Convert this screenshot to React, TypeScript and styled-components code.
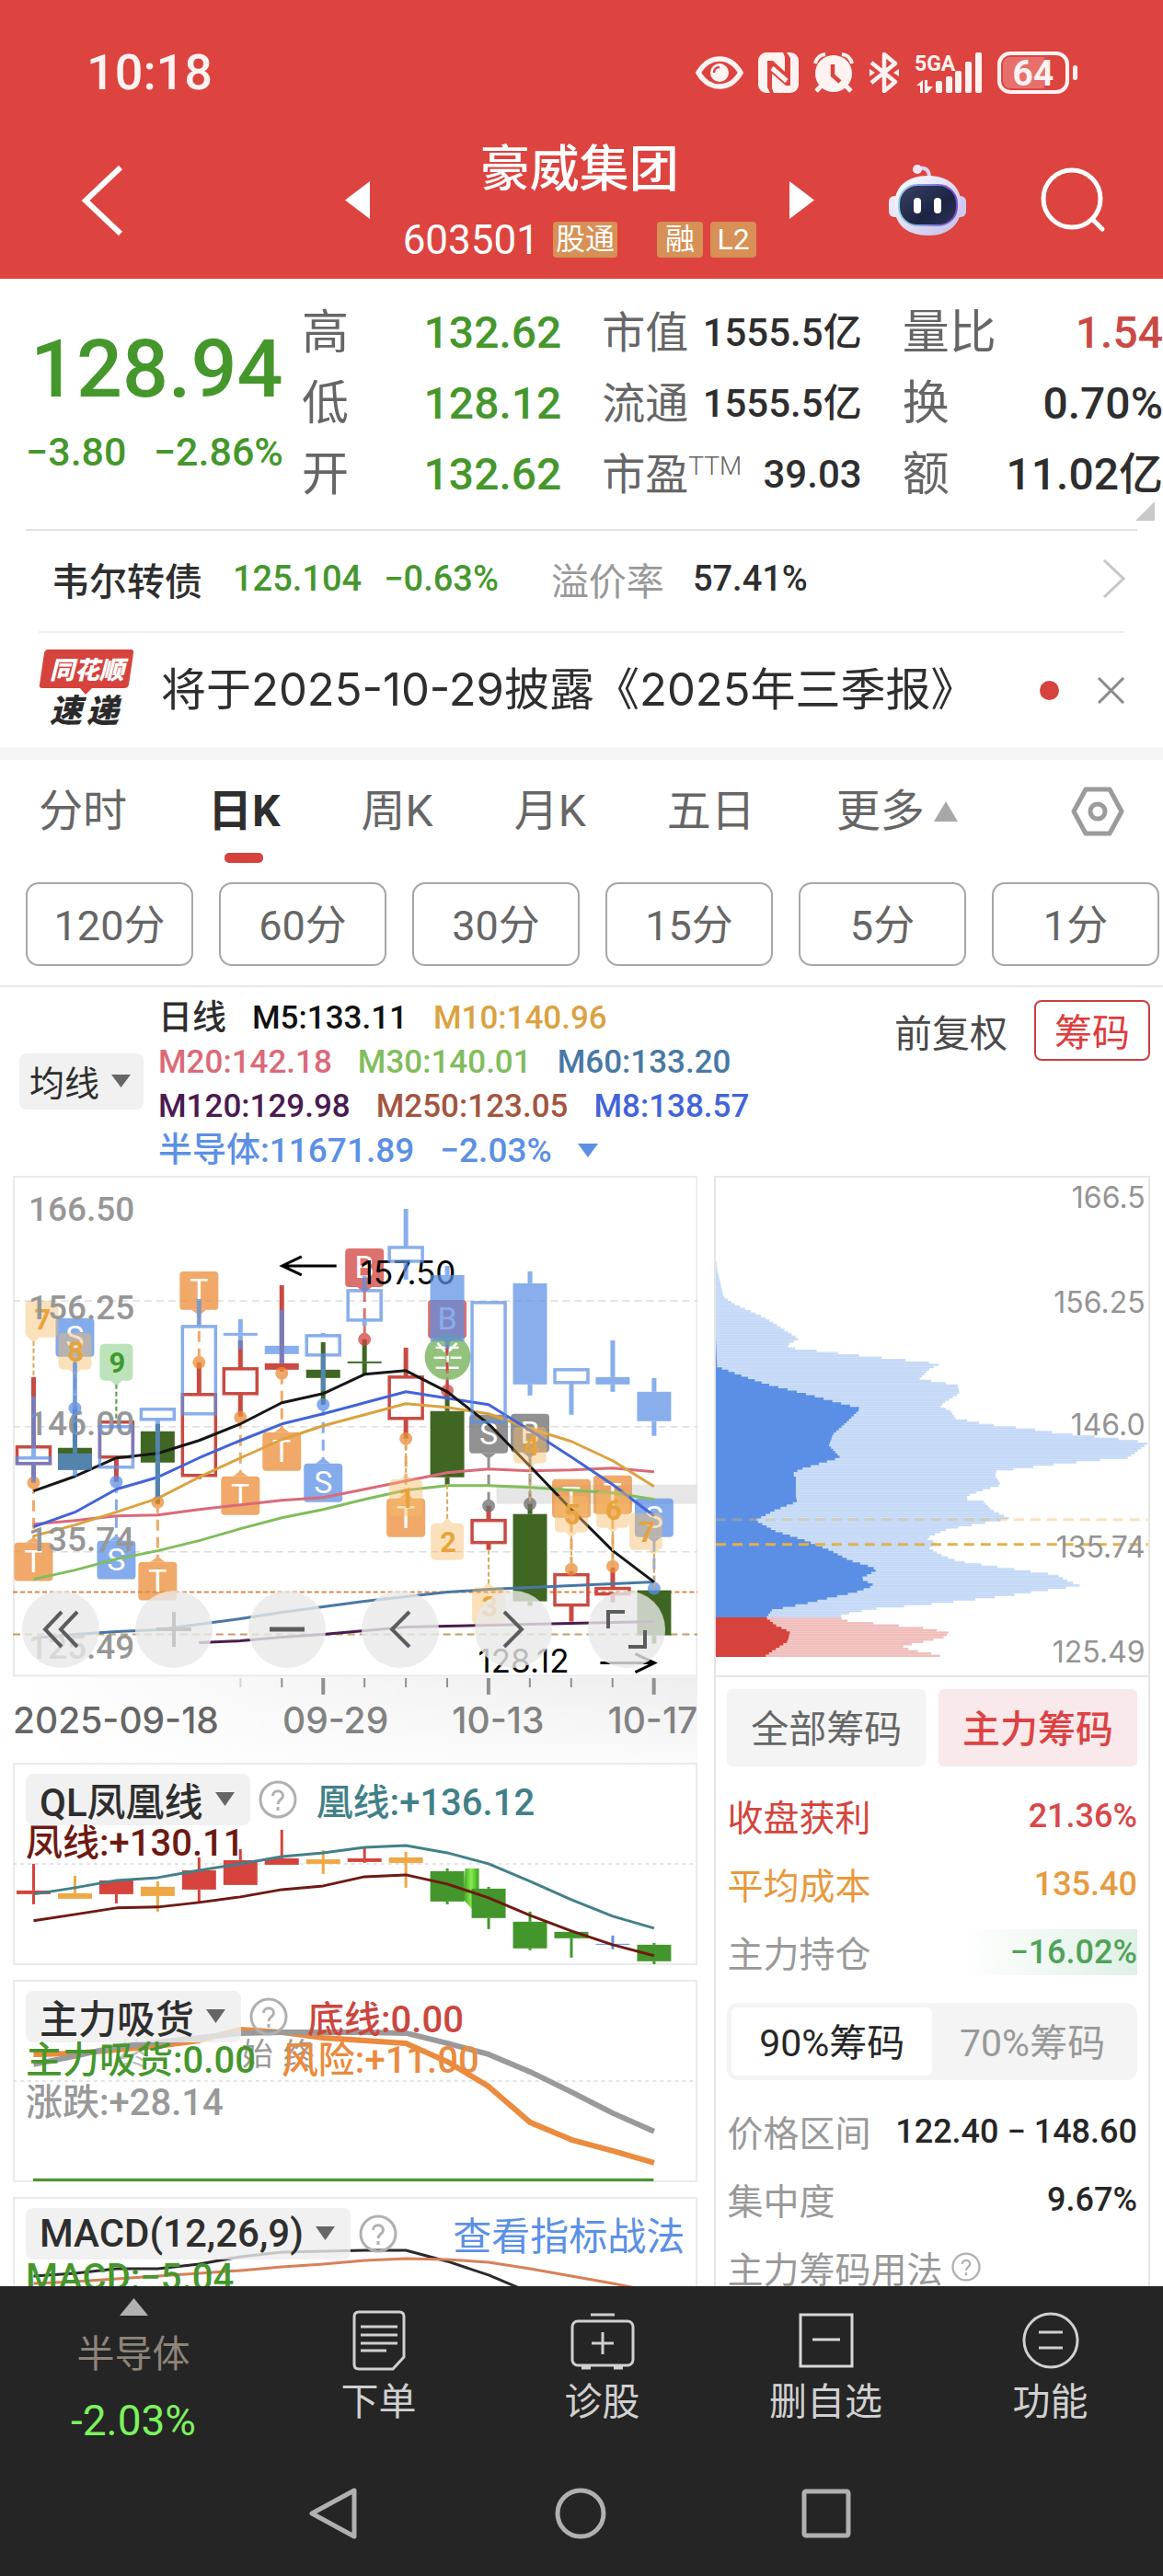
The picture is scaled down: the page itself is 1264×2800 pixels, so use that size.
import React from 'react';
import styled, { createGlobalStyle } from 'styled-components';

const SANS = "Roboto, 'Noto Sans CJK SC', sans-serif";
const WIDE = "Inter, 'Noto Sans CJK SC', sans-serif";

const C = {
  header: '#dd4440',
  red: '#d5433c',
  green: '#45972c',
  darkGreen: '#3f6622',
  ink: '#2e2e2e',
  text: '#666666',
  mute: '#999999',
  blue: '#5b90e5',
  orange: '#ea8b3e',
  amber: '#eea845',
  teal: '#428089',
  maroon: '#6e1a12',
  bar: '#252525',
};

const GlobalStyle = createGlobalStyle`
  * { box-sizing: border-box; }
  body { margin: 0; background: #ffffff; font-family: ${SANS}; color: ${C.ink}; }
  button { margin: 0; padding: 0; border: 0; background: none; font: inherit; color: inherit; cursor: pointer; }
  a { color: inherit; text-decoration: none; }
  svg { display: block; flex: none; }
  dl, dt, dd, p, h1 { margin: 0; font-weight: inherit; }
`;

const Shell = styled.div`
  display: flex;
  flex-direction: column;
  height: 100vh;
  overflow: hidden;
  white-space: nowrap;
`;

/* ---------- header ---------- */

const Header = styled.header`
  background: ${C.header};
  color: #ffffff;
`;

const StatusBar = styled.div`
  display: flex;
  justify-content: space-between;
  align-items: center;
  height: 146px;
  padding: 12px 92px 0 94px;
`;

const Clock = styled.time`
  font-size: 54px;
  font-weight: 500;
  line-height: 60px;
  color: #fff3f2;
`;

const StatusIcons = styled.div`
  display: flex;
  align-items: center;
  gap: 16px;
`;

const TitleBar = styled.div`
  display: flex;
  align-items: center;
  height: 157px;
  padding: 0 62px 14px 88px;
`;

const StockSwitch = styled.div`
  flex: 1;
  display: flex;
  justify-content: flex-end;
  align-items: center;
  gap: 36px;
  margin-right: 80px;
`;

const StockTitle = styled.div`
  display: flex;
  flex-direction: column;
  align-items: center;
  gap: 22px;
`;

const StockName = styled.h1`
  font-size: 54px;
  font-weight: 500;
  line-height: 64px;
`;

const CodeRow = styled.div`
  display: flex;
  align-items: center;
  gap: 8px;
  font-size: 44px;
  line-height: 44px;
`;

const Badge = styled.span<{ $width: number; $gap?: number }>`
  display: flex;
  justify-content: center;
  width: ${(p) => p.$width}px;
  height: 39px;
  margin-left: ${(p) => p.$gap ?? 0}px;
  border-radius: 4px;
  background: #d79055;
  font-size: 32px;
  line-height: 38px;
`;

const Actions = styled.div`
  display: flex;
  align-items: center;
  gap: 80px;
`;

/* ---------- quote ---------- */

const Quote = styled.section`
  position: relative;
  display: flex;
  height: 272px;
  padding-top: 20px;
`;

const PriceBlock = styled.div`
  display: flex;
  flex-direction: column;
  width: 328px;
  padding: 26px 20px 0 28px;
  color: ${C.green};
`;

const Price = styled.strong`
  padding-left: 5px;
  font-size: 88px;
  font-weight: 500;
  line-height: 104px;
`;

const Change = styled.div`
  display: flex;
  justify-content: space-between;
  font-size: 43px;
  font-weight: 500;
  line-height: 76px;
`;

const Stats = styled.div`
  flex: 1;
  display: grid;
  grid-template-columns: 281fr 281fr 282fr;
  column-gap: 44px;
`;

const StatList = styled.dl<{ $compact?: boolean }>`
  font-size: ${(p) => (p.$compact ? 47 : 51)}px;
  line-height: 77px;
`;

const Stat = styled.div<{ $color: string; $compact?: boolean }>`
  display: flex;
  justify-content: space-between;
  dt { display: flex; color: ${C.text}; }
  dd {
    color: ${(p) => p.$color};
    font-size: ${(p) => (p.$compact ? 42 : 48)}px;
    font-weight: 500;
  }
`;

const Sup = styled.span`
  font-size: 28px;
  font-weight: 300;
  line-height: 60px;
`;

const Corner = styled.svg`
  position: absolute;
  right: 9px;
  bottom: 9px;
`;

const BondLink = styled.a`
  display: flex;
  align-items: center;
  height: 111px;
  margin: 0 28px;
  padding: 0 12px 5px 28px;
  border-top: 2px solid #e4e4e4;
  font-size: 41px;
  font-weight: 500;
`;

const BondItem = styled.span<{ $color: string; $gap: number; $light?: boolean; $num?: boolean }>`
  margin-left: ${(p) => p.$gap}px;
  color: ${(p) => p.$color};
  font-size: ${(p) => (p.$num ? 38 : 41)}px;
  font-weight: ${(p) => (p.$light ? 400 : 500)};
`;

const Push = styled.span`
  margin-left: auto;
`;

const News = styled.div`
  display: flex;
  align-items: center;
  height: 126px;
  margin: 0 42px;
  border-top: 2px solid #efefef;
`;

const NewsText = styled.a`
  flex: 1;
  margin-left: 28px;
  font-family: ${WIDE};
  font-size: 49px;
  line-height: 64px;
`;

const Dot = styled.span`
  width: 21px;
  height: 21px;
  margin-right: 42px;
  border-radius: 50%;
  background: ${C.red};
`;

const Band = styled.div`
  height: 14px;
  background: #f5f5f5;
`;

/* ---------- period tabs ---------- */

const Tabs = styled.nav`
  display: flex;
  align-items: flex-start;
  gap: 88px;
  padding: 24px 42px 21px 42px;
`;

const Tab = styled.button<{ $active?: boolean }>`
  display: flex;
  flex-direction: column;
  align-items: center;
  gap: 13px;
  color: ${(p) => (p.$active ? C.ink : C.text)};
  font-size: 48px;
  font-weight: ${(p) => (p.$active ? 700 : 400)};
  line-height: 64px;
  &::after {
    content: '';
    width: 42px;
    height: 11px;
    border-radius: 5px;
    background: ${(p) => (p.$active ? C.red : 'transparent')};
  }
`;

const TabLabel = styled.span`
  display: flex;
  align-items: center;
  gap: 10px;
`;

const GearButton = styled.button`
  margin: 4px 0 0 auto;
`;

const Minutes = styled.div`
  display: flex;
  gap: 28px;
  padding: 0 4px 21px 28px;
  border-bottom: 2px solid #e8e8e8;
`;

const Minute = styled.button`
  flex: 1;
  height: 91px;
  padding-bottom: 4px;
  border: 2px solid #a6a6a6;
  border-radius: 14px;
  color: ${C.text};
  font-size: 45px;
`;

/* ---------- moving averages ---------- */

const Averages = styled.section`
  display: flex;
  align-items: center;
  height: 205px;
  padding: 0 14px 0 21px;
`;

const PickButton = styled.button<{ $size?: number }>`
  display: flex;
  align-items: center;
  gap: 13px;
  height: ${(p) => p.$size ?? 56}px;
  padding: 0 17px 0 15px;
  border-radius: 8px;
  background: rgba(238, 238, 238, 0.8);
  color: ${C.ink};
  font-size: 42px;
`;

const AverageButton = styled(PickButton)`
  padding: 0 14px 2px 11px;
  font-size: 38px;
`;

const AverageRows = styled.div`
  flex: 1;
  padding: 6px 0 0 16px;
`;

const AverageRow = styled.div<{ $big?: boolean }>`
  display: flex;
  align-items: center;
  gap: 28px;
  font-size: ${(p) => (p.$big ? 37 : 35)}px;
  font-weight: 500;
  line-height: 48px;
`;

const Ink = styled.span<{ $color: string; $size?: number }>`
  color: ${(p) => p.$color};
  font-size: ${(p) => (p.$size ? `${p.$size}px` : 'inherit')};
`;

const AverageSide = styled.div`
  align-self: flex-start;
  display: flex;
  align-items: center;
  gap: 29px;
  margin-top: 14px;
  color: #4a4a4a;
  font-size: 41px;
`;

const ChipToggle = styled.button`
  height: 66px;
  padding: 0 20px 4px;
  border: 2px solid #c8403f;
  border-radius: 8px;
  color: #dd3c3e;
  font-size: 41px;
`;

/* ---------- charts ---------- */

const Board = styled.main`
  flex: 1;
  min-height: 0;
  display: grid;
  grid-template-columns: 745fr 474fr;
  column-gap: 18px;
  padding: 0 14px;
  overflow: hidden;
`;

const LeftColumn = styled.div`
  min-width: 0;
`;

const ChartFrame = styled.div`
  position: relative;
`;

const Drawing = styled.svg`
  width: 100%;
  height: auto;
  font-family: ${SANS};
`;

const ChartTools = styled.div`
  position: absolute;
  left: 10px;
  right: 0;
  bottom: 10px;
  display: flex;
  gap: 39px;
`;

const Tool = styled.button`
  display: flex;
  align-items: center;
  justify-content: center;
  width: 84px;
  height: 84px;
  border-radius: 50%;
  background: rgba(232, 232, 232, 0.8);
`;

const Axis = styled.div`
  height: 93px;
  background: linear-gradient(90deg, #ffffff 0%, rgba(255, 255, 255, 0.5) 40%, rgba(255, 255, 255, 0) 100%),
    linear-gradient(180deg, #eeeeee, #fbfbfb);
`;

const Dates = styled.div`
  display: flex;
  justify-content: space-between;
  color: #828282;
  font-family: ${WIDE};
  font-size: 39px;
  font-weight: 500;
  line-height: 56px;
  time:first-child { color: ${C.text}; }
`;

const Panel = styled.section`
  position: relative;
  height: 220px;
  margin-bottom: 16px;
  padding: 11px 12px;
  border: 2px solid #ebebeb;
`;

const Backdrop = styled(Drawing)`
  position: absolute;
  left: -2px;
  top: -2px;
  width: calc(100% + 4px);
`;

const PanelHead = styled.div`
  position: relative;
  display: flex;
  align-items: center;
  height: 54px;
  margin-bottom: -2px;
  font-size: 40px;
  font-weight: 500;
`;

const PanelLine = styled.p`
  position: relative;
  display: flex;
  gap: 28px;
  font-size: 40px;
  font-weight: 500;
  line-height: 46px;
`;

const HelpButton = styled.button`
  margin: 0 21px 0 9px;
`;

const StrategyLink = styled.a`
  margin-left: auto;
  color: ${C.blue};
  font-size: 42px;
  font-weight: 400;
`;

/* ---------- chip column ---------- */

const ChipColumn = styled.aside`
  border: 2px solid #e6e6e6;
  border-bottom: 0;
`;

const ChipBody = styled.div`
  padding: 13px 12px 0;
  border-top: 2px solid #e6e6e6;
`;

const ChipTabs = styled.div`
  display: grid;
  grid-template-columns: 1fr 1fr;
  gap: 14px;
  margin-bottom: 17px;
`;

const ChipTab = styled.button<{ $active?: boolean }>`
  height: 84px;
  padding-bottom: 3px;
  border-radius: 6px;
  background: ${(p) => (p.$active ? '#fae9ea' : '#f4f4f4')};
  color: ${(p) => (p.$active ? '#dc4245' : C.text)};
  font-size: 41px;
  font-weight: ${(p) => (p.$active ? 500 : 400)};
`;

const ChipRow = styled.div<{ $label?: string; $value?: string; $glow?: boolean }>`
  display: flex;
  justify-content: space-between;
  align-items: center;
  height: 74px;
  dt {
    display: flex;
    align-items: center;
    gap: 10px;
    padding-bottom: 2px;
    color: ${(p) => p.$label ?? C.mute};
    font-size: 39px;
  }
  dd {
    width: ${(p) => (p.$glow ? '190px' : 'auto')};
    color: ${(p) => p.$value ?? '#262626'};
    background: ${(p) => (p.$glow ? 'linear-gradient(90deg, #ffffff, #dff1e5)' : 'none')};
    font-size: 36px;
    font-weight: 500;
    line-height: 50px;
    text-align: right;
  }
`;

const Segmented = styled.div`
  display: grid;
  grid-template-columns: 1fr 1fr;
  height: 84px;
  margin: 18px 0 19px;
  padding: 5px;
  border-radius: 12px;
  background: #f4f4f4;
`;

const Segment = styled.button<{ $active?: boolean }>`
  padding-bottom: 4px;
  border-radius: 6px;
  background: ${(p) => (p.$active ? '#ffffff' : 'transparent')};
  color: ${(p) => (p.$active ? '#262626' : C.mute)};
  font-size: 41px;
`;

/* ---------- footer ---------- */

const Footer = styled.footer`
  flex: none;
  height: 315px;
  background: ${C.bar};
  color: #d0d0d0;
`;

const ActionBar = styled.nav`
  display: grid;
  grid-template-columns: 290fr 243fr 243fr 243fr 245fr;
  height: 200px;
`;

const Sector = styled.button`
  display: flex;
  flex-direction: column;
  align-items: center;
  gap: 12px;
  padding-top: 13px;
  color: #8f8479;
  font-size: 41px;
  line-height: 60px;
`;

const SectorMove = styled.span`
  color: #7df25f;
  font-size: 46px;
`;

const Action = styled.button`
  display: flex;
  flex-direction: column;
  align-items: center;
  padding-top: 26px;
  gap: 4px;
  font-size: 41px;
  line-height: 60px;
`;

const SystemBar = styled.div`
  display: flex;
  justify-content: center;
  align-items: center;
  gap: 212px;
  height: 94px;
  padding-right: 4px;
`;

/* ---------- icons ---------- */

const Triangle = ({ dir, w, h, fill }: { dir: 'up' | 'down' | 'left' | 'right'; w: number; h: number; fill: string }) => {
  const pts = {
    up: `0,${h} ${w / 2},0 ${w},${h}`,
    down: `0,0 ${w / 2},${h} ${w},0`,
    left: `${w},0 0,${h / 2} ${w},${h}`,
    right: `0,0 ${w},${h / 2} 0,${h}`,
  }[dir];
  return (
    <svg width={w} height={h}>
      <polygon points={pts} fill={fill} />
    </svg>
  );
};

const Help = ({ size }: { size: number }) => (
  <svg width={size} height={size} viewBox="0 0 42 42" fill="none" stroke="#b0b0b0" strokeWidth="3">
    <circle cx="21" cy="21" r="19" />
    <path d="M15.5 17c0-7 11-7 11 0 0 4-5.500 4.500-5.500 9" />
    <path d="M21 29v4" />
  </svg>
);

const EyeIcon = () => (
  <svg width="52" height="44" viewBox="0 0 52 44">
    <path d="M3 22C10 10 18 7 26 7s16 3 23 15c-7 12-15 15-23 15S10 34 3 22z" fill="none" stroke="#fff3f2" strokeWidth="5.500" />
    <circle cx="26" cy="22" r="10" fill="#fff3f2" />
    <path d="M20 22c0-4 3-6 6-6" fill="none" stroke={C.header} strokeWidth="2.500" />
  </svg>
);

const NfcIcon = () => (
  <svg width="44" height="44" viewBox="0 0 44 44">
    <rect width="44" height="44" rx="9" fill="#fff3f2" />
    <path d="M11 9h5l13 12V5L27 0h4l4 6v30h-5L15 23v16l2 5h-4l-3-6V9z" fill={C.header} />
    <path d="M14 12v26l3 6h-3M31 32V6l-3-6" fill="none" stroke="#fff3f2" strokeWidth="0" />
    <path d="M15 17l16 14" stroke="#fff3f2" strokeWidth="5" />
  </svg>
);

const AlarmIcon = () => (
  <svg width="44" height="44" viewBox="0 0 44 44" fill="none" stroke="#fff3f2">
    <circle cx="22" cy="23" r="20" fill="#fff3f2" stroke="none" />
    <path d="M2 12Q4 3 13 2M42 12Q40 3 31 2" strokeWidth="4" />
    <path d="M9 36l-6 6M35 36l6 6" strokeWidth="5" />
    <path d="M21 13v12l8 7" stroke={C.header} strokeWidth="4.500" />
  </svg>
);

const BluetoothIcon = () => (
  <svg width="34" height="44" viewBox="0 0 34 44" fill="none" stroke="#fff3f2" strokeWidth="4.500" strokeLinejoin="round">
    <path d="M3 11l26 21-12 10V2l12 10L3 33" />
    <path d="M1 18l6 4-6 4zM33 18l-6 4 6 4z" fill="#fff3f2" stroke="none" />
  </svg>
);

const SignalIcon = () => (
  <svg width="74" height="46" viewBox="0 0 74 46" fill="#fff3f2">
    <text x="0" y="21" fontFamily="Roboto, sans-serif" fontSize="23" fontWeight="700">5GA</text>
    <rect x="23" y="32" width="7" height="13" rx="2" />
    <rect x="34" y="27" width="7" height="18" rx="2" />
    <rect x="44" y="21" width="7" height="24" rx="2" />
    <rect x="55" y="11" width="7" height="34" rx="2" />
    <rect x="66" y="1" width="7" height="44" rx="2" />
    <path d="M2 37l7-6v14H6v-8zM11 31h3v7h6l-6 7h-3z" />
  </svg>
);

const BatteryIcon = () => (
  <svg width="88" height="46" viewBox="0 0 88 46">
    <rect x="2" y="2" width="74" height="42" rx="12" fill="none" stroke="#fff3f2" strokeWidth="4" />
    <path d="M14 6h37v34H14a8 8 0 0 1-8-8V14a8 8 0 0 1 8-8z" fill="#e8706c" />
    <rect x="82" y="15" width="5" height="16" rx="2.500" fill="#fff3f2" />
    <text x="39" y="37" textAnchor="middle" fontFamily="Roboto, sans-serif" fontSize="39" fontWeight="700" fill="#fff3f2">64</text>
  </svg>
);

const RobotIcon = () => (
  <svg width="86" height="78" viewBox="0 0 86 78">
    <defs>
      <linearGradient id="shell" x1="0" y1="0" x2="1" y2="1">
        <stop offset="0" stopColor="#ffffff" />
        <stop offset="1" stopColor="#c3bce8" />
      </linearGradient>
      <linearGradient id="visor" x1="0" y1="0" x2="1" y2="1">
        <stop offset="0" stopColor="#3a4364" />
        <stop offset="0.6" stopColor="#1b2443" />
        <stop offset="1" stopColor="#2c3457" />
      </linearGradient>
      <linearGradient id="rim" x1="0" y1="0" x2="1" y2="0">
        <stop offset="0" stopColor="#8fd3e6" />
        <stop offset="1" stopColor="#7a4bd6" />
      </linearGradient>
    </defs>
    <path d="M32 5c8-3 13 0 13 9" fill="none" stroke="#d9d6ee" strokeWidth="4" />
    <circle cx="32" cy="5" r="5" fill="#e9e6f8" />
    <rect x="1" y="34" width="14" height="23" rx="6" fill="#eae8f8" />
    <rect x="71" y="34" width="14" height="23" rx="6" fill="#cfcaf0" />
    <path d="M44 12c24 0 36 14 36 33S66 77 44 77 7 66 7 45s13-33 37-33z" fill="url(#shell)" />
    <rect x="12" y="22" width="63" height="44" rx="20" fill="url(#visor)" stroke="url(#rim)" strokeWidth="2" />
    <rect x="28" y="36" width="8" height="17" rx="4" fill="#ffffff" />
    <rect x="50" y="36" width="8" height="17" rx="4" fill="#ffffff" />
  </svg>
);

const SearchIcon = () => (
  <svg width="71" height="71" viewBox="0 0 71 71" fill="none" stroke="#ffffff" strokeWidth="5">
    <circle cx="34" cy="34" r="31" />
    <path d="M56 56l11 11" strokeLinecap="round" />
  </svg>
);

const BrandMark = () => (
  <svg width="105" height="92" viewBox="0 -1 105 92">
    <path d="M10 1h90q4 0 3 4l-5 34q-1 4-5 4H58l-7 7-6-7H4q-4 0-3-4L6 5q1-4 4-4z" fill={C.red} />
    <g fontFamily="'Noto Sans CJK SC', sans-serif" fontWeight="900" fontStyle="italic">
      <text x="12" y="33" fontSize="27" fill="#ffffff">同花顺</text>
      <text x="12" y="80" fontSize="35" fill="#2b2b2b">速</text>
      <text x="52" y="80" fontSize="35" fill="#2b2b2b">递</text>
    </g>
  </svg>
);

/* ---------- chart data ---------- */

const colX = (i: number) => 36.5 + 45 * i;

type Candle = { i: number; hi: number; top: number; bot: number; lo: number; color: string; hollow?: boolean };

const R = '#c94a42';
const G = C.darkGreen;
const candles: Candle[] = [
  { i: 0, hi: 1497, top: 1573, bot: 1591, lo: 1612, color: R, hollow: true },
  { i: 1, hi: 1532, top: 1574, bot: 1598, lo: 1598, color: G },
  { i: 2, hi: 1546, top: 1546, bot: 1584, lo: 1611, color: R, hollow: true },
  { i: 3, hi: 1548, top: 1556, bot: 1590, lo: 1635, color: G },
  { i: 4, hi: 1481, top: 1516, bot: 1604, lo: 1608, color: R, hollow: true },
  { i: 5, hi: 1457, top: 1488, bot: 1515, lo: 1540, color: R, hollow: true },
  { i: 6, hi: 1397, top: 1482, bot: 1489, lo: 1491, color: R },
  { i: 7, hi: 1459, top: 1489, bot: 1498, lo: 1527, color: G },
  { i: 8, hi: 1456, top: 1480, bot: 1482, lo: 1494, color: G },
  { i: 9, hi: 1465, top: 1497, bot: 1542, lo: 1564, color: R, hollow: true },
  { i: 10, hi: 1512, top: 1534, bot: 1606, lo: 1614, color: G },
  { i: 11, hi: 1637, top: 1653, bot: 1677, lo: 1685, color: R, hollow: true },
  { i: 12, hi: 1635, top: 1646, bot: 1741, lo: 1746, color: G },
  { i: 13, hi: 1708, top: 1712, bot: 1745, lo: 1763, color: R, hollow: true },
  { i: 14, hi: 1704, top: 1727, bot: 1733, lo: 1742, color: R, hollow: true },
  { i: 15, hi: 1729, top: 1729, bot: 1778, lo: 1787, color: G },
];

const B = C.blue;
const sectorCandles: Candle[] = [
  { i: 0, hi: 1518, top: 1585, bot: 1591, lo: 1611, color: B, hollow: true },
  { i: 1, hi: 1481, top: 1580, bot: 1598, lo: 1605, color: B },
  { i: 2, hi: 1550, top: 1551, bot: 1595, lo: 1595, color: B, hollow: true },
  { i: 3, hi: 1531, top: 1532, bot: 1543, lo: 1628, color: B, hollow: true },
  { i: 4, hi: 1412, top: 1442, bot: 1537, lo: 1538, color: B, hollow: true },
  { i: 5, hi: 1434, top: 1449, bot: 1452, lo: 1467, color: B },
  { i: 6, hi: 1424, top: 1463, bot: 1472, lo: 1482, color: B },
  { i: 7, hi: 1449, top: 1452, bot: 1473, lo: 1512, color: B, hollow: true },
  { i: 8, hi: 1387, top: 1403, bot: 1435, lo: 1441, color: B, hollow: true },
  { i: 9, hi: 1314, top: 1356, bot: 1371, lo: 1391, color: B, hollow: true },
  { i: 10, hi: 1376, top: 1386, bot: 1458, lo: 1466, color: B },
  { i: 11, hi: 1415, top: 1416, bot: 1546, lo: 1547, color: B, hollow: true },
  { i: 12, hi: 1382, top: 1395, bot: 1505, lo: 1517, color: B },
  { i: 13, hi: 1488, top: 1489, bot: 1503, lo: 1538, color: B, hollow: true },
  { i: 14, hi: 1457, top: 1497, bot: 1505, lo: 1513, color: B },
  { i: 15, hi: 1498, top: 1513, bot: 1545, lo: 1561, color: B },
];

const averages = [
  { color: '#4b1b50', from: 4, ys: [1786, 1784, 1780, 1777, 1773, 1769, 1768, 1767, 1766, 1765, 1764, 1763] },
  { color: '#4878a4', from: 0, ys: [1781, 1777, 1774, 1772, 1766, 1760, 1753, 1747, 1741, 1736, 1731, 1728, 1726, 1724, 1722, 1720] },
  { color: '#81bd5c', from: 0, ys: [1717, 1707, 1695, 1686, 1675, 1662, 1650, 1641, 1630, 1620, 1615, 1615, 1617, 1620, 1623, 1630] },
  { color: '#db6a78', from: 0, ys: [1657, 1653, 1648, 1647, 1641, 1636, 1631, 1628, 1619, 1610, 1601, 1597, 1599, 1598, 1596, 1600] },
  { color: '#dba23f', from: 0, ys: [1670, 1658, 1644, 1629, 1606, 1585, 1565, 1550, 1538, 1526, 1530, 1537, 1553, 1567, 1588, 1616] },
  { color: '#4264d8', from: 0, ys: [1660, 1644, 1619, 1606, 1585, 1566, 1548, 1537, 1525, 1513, 1520, 1527, 1555, 1584, 1614, 1648] },
  { color: '#161616', from: 0, ys: [1621, 1605, 1585, 1580, 1566, 1548, 1525, 1515, 1494, 1490, 1513, 1548, 1594, 1641, 1686, 1720] },
];

const T_COLOR = '#eb8d38';
const GRAY = '#6d6d6d';
const flags = [
  { i: 0, label: 'T', top: 1677, dot: 1612, color: T_COLOR },
  { i: 1, label: 'S', top: 1433, dot: 1531, color: B },
  { i: 2, label: 'S', top: 1675, dot: 1611, color: B },
  { i: 3, label: 'T', top: 1698, dot: 1633, color: T_COLOR },
  { i: 4, label: 'T', top: 1382, dot: 1481, color: T_COLOR },
  { i: 5, label: 'T', top: 1605, dot: 1541, color: T_COLOR },
  { i: 6, label: 'T', top: 1557, dot: 1493, color: T_COLOR },
  { i: 7, label: 'S', top: 1591, dot: 1527, color: B },
  { i: 8, label: 'B', top: 1357, dot: 1456, color: '#d2423e' },
  { i: 9, label: 'T', top: 1629, dot: 1564, color: T_COLOR },
  { i: 10, label: 'B', top: 1413, dot: 1512, color: '#d2423e' },
  { i: 11, label: 'S', top: 1538, dot: 1637, color: GRAY },
  { i: 12, label: 'B', top: 1537, dot: 1635, color: GRAY },
  { i: 13, label: 'T', top: 1608, dot: 1706, color: T_COLOR },
  { i: 14, label: 'T', top: 1604, dot: 1703, color: T_COLOR },
  { i: 15, label: 'S', top: 1629, dot: 1727, color: B },
];

const counts = [
  { i: 0, n: '7', top: 1414, end: 1497, dx: 9 },
  { i: 1, n: '8', top: 1449, end: 1531 },
  { i: 2, n: '9', top: 1461, end: 1546, green: true },
  { i: 9, n: '1', top: 1608, end: 1564 },
  { i: 10, n: '2', top: 1656, end: 1614 },
  { i: 11, n: '3', top: 1726, end: 1685 },
  { i: 12, n: '4', top: 1551, end: 1635 },
  { i: 13, n: '5', top: 1626, end: 1706 },
  { i: 14, n: '6', top: 1621, end: 1703 },
  { i: 15, n: '7', top: 1645, end: 1727, dx: -9 },
];

const Candles = ({ data, opacity = 1, width = 37, wick = 5 }: { data: Candle[]; opacity?: number; width?: number; wick?: number }) => (
  <g opacity={opacity}>
    {data.map((c) => {
      const x = colX(c.i);
      return (
        <g key={c.i} fill={c.color} stroke="none">
          <rect x={x - wick / 2} y={c.hi} width={wick} height={Math.max(0, c.top - c.hi)} />
          <rect x={x - wick / 2} y={c.bot} width={wick} height={Math.max(0, c.lo - c.bot)} />
          {c.hollow ? (
            <rect x={x - 18} y={c.top} width={36} height={c.bot - c.top} fill="none" stroke={c.color} strokeWidth="3.500" />
          ) : (
            <rect x={x - width / 2} y={c.top} width={width} height={c.bot - c.top} />
          )}
        </g>
      );
    })}
  </g>
);

const Line = ({ ys, color, width = 3, from = 0 }: { ys: number[]; color: string; width?: number; from?: number }) => (
  <polyline
    points={ys.map((y, k) => `${colX(k + from)},${y}`).join(' ')}
    fill="none"
    stroke={color}
    strokeWidth={width}
    strokeLinejoin="round"
  />
);

const Flag = ({ i, label, top, dot, color }: (typeof flags)[number]) => {
  const x = colX(i);
  const below = dot < top;
  const tip = below ? `${x - 8},${top} ${x},${top - 6} ${x + 8},${top}` : `${x - 8},${top + 42} ${x},${top + 48} ${x + 8},${top + 42}`;
  return (
    <g opacity="0.75">
      <line x1={x} x2={x} y1={below ? dot : top + 46} y2={below ? top - 4 : dot} stroke={color} strokeWidth="3" strokeDasharray="12 7" />
      <circle cx={x} cy={dot} r="7" fill={color} />
      <rect x={x - 21} y={top} width="42" height="42" rx="4" fill={color} />
      <polygon points={tip} fill={color} />
      <text x={x} y={top + 32} textAnchor="middle" fontSize="34" fill="#ffffff">{label}</text>
    </g>
  );
};

const Count = ({ i, n, top, end, dx = 0, green }: { i: number; n: string; top: number; end: number; dx?: number; green?: boolean }) => {
  const x = colX(i);
  const below = end < top;
  const ink = green ? '#3f9a2e' : '#e8a33d';
  const edge = below ? top : top + 40;
  return (
    <g>
      <line x1={x} x2={x} y1={below ? end : top + 44} y2={below ? top - 4 : end} stroke={green ? '#4f9a3e' : '#d9a85a'} strokeWidth="2" strokeDasharray="5 3" />
      <rect x={x - 18 + dx} y={top} width="36" height="40" rx="5" fill={green ? '#6cc067' : '#f3bd69'} opacity="0.45" />
      <polygon points={`${x - 6},${edge} ${x},${below ? edge - 6 : edge + 6} ${x + 6},${edge}`} fill={green ? '#6cc067' : '#f3bd69'} opacity="0.45" />
      <text x={x + dx + 1} y={top + 31} textAnchor="middle" fontSize="31" fontWeight="700" fill={ink}>{n}</text>
    </g>
  );
};

const priceLabels = [
  { y: 1327, t: '166.50' },
  { y: 1434, t: '156.25' },
  { y: 1560, t: '146.00' },
  { y: 1686, t: '135.74' },
  { y: 1803, t: '125.49' },
];

const MainChart = () => (
  <Drawing viewBox="14 1278 745 545" role="img" aria-label="日K线图">
    <rect x="15" y="1279" width="743" height="543" fill="#ffffff" stroke="#eaeaea" strokeWidth="2" />
    {[1414, 1551, 1687].map((y) => (
      <line key={y} x1="14" x2="759" y1={y} y2={y} stroke="#dedede" strokeWidth="1.500" strokeDasharray="8 5" />
    ))}
    <rect x="540" y="1614" width="219" height="21" fill="#e6e6e6" />
    <line x1="14" x2="759" y1="1731" y2="1731" stroke="#d98745" strokeWidth="2" strokeDasharray="5 3" />
    <line x1="14" x2="759" y1="1777" y2="1777" stroke="#bfa06a" strokeWidth="2" strokeDasharray="8 5" />
    <Candles data={candles} />
    {flags.map((f) => <Flag key={f.i} {...f} />)}
    <g opacity="0.8">
      <circle cx="487" cy="1475" r="25" fill="#79b45d" />
      <path d="M474 1465h25M476 1460l8 9M497 1460l-9 9M487 1462v23M472 1476h12M490 1476h12M474 1487h25" fill="none" stroke="#ffffff" strokeWidth="2.500" />
      <line x1="486.5" x2="486.5" y1="1462" y2="1512" stroke="#c23c38" strokeWidth="3" strokeDasharray="12 7" />
    </g>
    {averages.map((a) => <Line key={a.color} {...a} />)}
    {counts.map((c) => <Count key={c.i} {...c} />)}
    <g fontSize="37" fontWeight="500" fill="#979797">
      {priceLabels.map((p) => <text key={p.t} x="31" y={p.y}>{p.t}</text>)}
    </g>
    <g fontSize="35" fontFamily="Inter, sans-serif" fill="#000000">
      <text x="392" y="1396">157.50</text>
      <text x="520" y="1818">128.12</text>
    </g>
    <g fill="none" stroke="#000000" strokeWidth="3">
      <path d="M366 1376h-59M328 1366l-21 10 21 10" />
      <path d="M653 1808h59M691 1798l21 10-21 10" />
    </g>
    <Candles data={sectorCandles} opacity={0.72} />
  </Drawing>
);

/* Chip profile samples: [volume, level], drawn as thin horizontal bars. */
type Sample = [number, number];

const allChips: Sample[] = [
  [0, 240], [9, 290], [29, 355], [67, 375], [162, 408], [273, 463], [235, 480], [250, 487], [367, 497], [505, 509], [661, 521],
  [737, 527], [699, 542], [667, 567], [753, 578], [793, 584], [798, 604], [747, 628], [737, 638], [769, 650], [785, 668],
  [887, 684], [1017, 695], [1119, 706], [1263, 718], [1345, 724], [1415, 732], [1367, 760], [1347, 770], [1257, 776],
  [1115, 787], [985, 799], [919, 805], [914, 817], [934, 840], [882, 852], [832, 866], [815, 877], [877, 884], [902, 905],
  [965, 928], [882, 938], [757, 955], [689, 978], [723, 990], [699, 1003], [732, 1020], [797, 1038], [922, 1052],
  [1039, 1065], [1115, 1073], [1155, 1090], [1194, 1101], [1087, 1112], [977, 1124], [850, 1136], [707, 1148], [527, 1160],
  [447, 1170], [404, 1180], [415, 1187], [433, 1192], [587, 1203], [679, 1210], [763, 1221], [752, 1233], [680, 1246],
  [612, 1257], [642, 1268], [692, 1273], [743, 1284],
];

const mainChips: Sample[] = [
  [0, 400], [7, 535], [57, 550], [167, 580], [297, 606], [412, 630], [475, 643], [427, 680], [385, 710], [372, 738],
  [409, 770], [357, 782], [277, 800], [253, 812], [264, 822], [264, 870], [268, 884], [197, 905], [131, 932], [197, 960],
  [297, 985], [377, 1010], [437, 1035], [507, 1052], [529, 1060], [475, 1083], [520, 1100], [457, 1118], [387, 1130],
  [297, 1147], [187, 1163], [167, 1184], [197, 1203], [245, 1220], [237, 1245], [187, 1270], [162, 1284],
];

const volumeAt = (samples: Sample[], level: number) => {
  const k = samples.findIndex((s) => s[1] >= level);
  if (k <= 0) return 0;
  const [v0, l0] = samples[k - 1];
  const [v1, l1] = samples[k];
  return v0 + ((v1 - v0) * (level - l0)) / (l1 - l0);
};

const profilePath = (samples: Sample[], from: number, to: number) => {
  let d = '';
  for (let level = from; level < to; level += 6) {
    const y = 1260 + level * 0.421;
    const w = Math.max(0, volumeAt(samples, level + 2) / 3);
    d += `M778 ${y.toFixed(1)}h${w.toFixed(1)}v2.6h-${w.toFixed(1)}z`;
  }
  return d;
};

const ChipChart = () => (
  <Drawing viewBox="779 1280 470 541" role="img" aria-label="筹码分布">
    <defs>
      <pattern id="rows" width="8" height="2.526" patternUnits="userSpaceOnUse">
        <rect width="8" height="0.8" fill="#ffffff" opacity="0.22" />
      </pattern>
    </defs>
    <path d={profilePath(allChips, 240, 1184)} fill="#c3d8f7" />
    <path d={profilePath(allChips, 1184, 1282)} fill="#f0bdbb" />
    <rect x="779" y="1360" width="471" height="440" fill="url(#rows)" />
    <path d={profilePath(mainChips, 400, 1184)} fill="#5a8fe5" />
    <path d={profilePath(mainChips, 1184, 1282)} fill={C.red} />
    <line x1="779" x2="1249" y1="1652" y2="1652" stroke="#e9b44e" strokeWidth="3" strokeDasharray="11 7" opacity="0.35" />
    <line x1="779" x2="1249" y1="1679" y2="1679" stroke="#e3b04c" strokeWidth="3" strokeDasharray="11 7" />
    <g fontFamily="Inter, sans-serif" fontSize="32" fill="#949494" textAnchor="end">
      <text x="1246" y="1313">166.5</text>
      <text x="1246" y="1427">156.25</text>
      <text x="1246" y="1560">146.0</text>
      <text x="1246" y="1693">135.74</text>
      <text x="1246" y="1807">125.49</text>
    </g>
  </Drawing>
);

const O = C.amber;
const LG = '#43962b';
const phoenix: Candle[] = [
  { i: 0, hi: 2026, top: 2055, bot: 2059, lo: 2070, color: C.red },
  { i: 1, hi: 2039, top: 2058, bot: 2064, lo: 2064, color: O },
  { i: 2, hi: 2044, top: 2044, bot: 2059, lo: 2069, color: C.red },
  { i: 3, hi: 2045, top: 2051, bot: 2061, lo: 2078, color: O },
  { i: 4, hi: 2019, top: 2033, bot: 2054, lo: 2068, color: C.red },
  { i: 5, hi: 2010, top: 2022, bot: 2049, lo: 2049, color: C.red },
  { i: 6, hi: 1989, top: 2020, bot: 2027, lo: 2027, color: C.red },
  { i: 7, hi: 2011, top: 2021, bot: 2026, lo: 2037, color: O },
  { i: 8, hi: 2009, top: 2020, bot: 2024, lo: 2025, color: C.red },
  { i: 9, hi: 2013, top: 2019, bot: 2025, lo: 2052, color: O },
  { i: 10, hi: 2031, top: 2034, bot: 2067, lo: 2070, color: LG },
  { i: 11, hi: 2051, top: 2053, bot: 2085, lo: 2097, color: LG },
  { i: 12, hi: 2078, top: 2089, bot: 2118, lo: 2120, color: LG },
  { i: 13, hi: 2100, top: 2100, bot: 2107, lo: 2128, color: LG },
  { i: 14, hi: 2104, top: 2113, bot: 2114, lo: 2119, color: B },
  { i: 15, hi: 2112, top: 2114, bot: 2132, lo: 2136, color: LG },
];

const periods = ['分时', '日K', '周K', '月K', '五日'];
const minutes = ['120分', '60分', '30分', '15分', '5分', '1分'];

export default function App() {
  return (
    <>
      <GlobalStyle />
      <Shell>
        <Header>
          <StatusBar>
            <Clock>10:18</Clock>
            <StatusIcons>
              <EyeIcon />
              <NfcIcon />
              <AlarmIcon />
              <BluetoothIcon />
              <SignalIcon />
              <BatteryIcon />
            </StatusIcons>
          </StatusBar>
          <TitleBar>
            <button aria-label="返回">
              <svg width="46" height="76" fill="none" stroke="#ffffff" strokeWidth="6">
                <path d="M43 2L5 38l38 36" />
              </svg>
            </button>
            <StockSwitch>
              <button aria-label="上一只"><Triangle dir="left" w={27} h={41} fill="#ffffff" /></button>
              <StockTitle>
                <StockName>豪威集团</StockName>
                <CodeRow>
                  603501
                  <Badge $width={70} $gap={7}>股通</Badge>
                  <Badge $width={50} $gap={35}>融</Badge>
                  <Badge $width={50}>L2</Badge>
                </CodeRow>
              </StockTitle>
              <button aria-label="下一只"><Triangle dir="right" w={27} h={41} fill="#ffffff" /></button>
            </StockSwitch>
            <Actions>
              <button aria-label="智能助手"><RobotIcon /></button>
              <button aria-label="搜索"><SearchIcon /></button>
            </Actions>
          </TitleBar>
        </Header>

        <Quote>
          <PriceBlock>
            <Price>128.94</Price>
            <Change><span>−3.80</span><span>−2.86%</span></Change>
          </PriceBlock>
          <Stats>
            <StatList>
              <Stat $color={C.green}><dt>高</dt><dd>132.62</dd></Stat>
              <Stat $color={C.green}><dt>低</dt><dd>128.12</dd></Stat>
              <Stat $color={C.green}><dt>开</dt><dd>132.62</dd></Stat>
            </StatList>
            <StatList $compact>
              <Stat $compact $color={C.ink}><dt>市值</dt><dd>1555.5亿</dd></Stat>
              <Stat $compact $color={C.ink}><dt>流通</dt><dd>1555.5亿</dd></Stat>
              <Stat $compact $color={C.ink}><dt>市盈<Sup>TTM</Sup></dt><dd>39.03</dd></Stat>
            </StatList>
            <StatList>
              <Stat $color="#ca4a43"><dt>量比</dt><dd>1.54</dd></Stat>
              <Stat $color={C.ink}><dt>换</dt><dd>0.70%</dd></Stat>
              <Stat $color={C.ink}><dt>额</dt><dd>11.02亿</dd></Stat>
            </StatList>
          </Stats>
          <Corner width="21" height="21"><polygon points="21,0 21,21 0,21" fill="#c9c9c9" /></Corner>
        </Quote>

        <BondLink href="#bond">
          韦尔转债
          <BondItem $color={C.green} $gap={33} $num>125.104</BondItem>
          <BondItem $color={C.green} $gap={24} $num>−0.63%</BondItem>
          <BondItem $color={C.mute} $gap={57} $light>溢价率</BondItem>
          <BondItem $color={C.ink} $gap={31} $num>57.41%</BondItem>
          <Push>
            <svg width="26" height="44" fill="none" stroke="#c6c6c6" strokeWidth="3">
              <path d="M2 2l21 20L2 42" />
            </svg>
          </Push>
        </BondLink>

        <News>
          <BrandMark />
          <NewsText href="#news">将于2025-10-29披露《2025年三季报》</NewsText>
          <Dot />
          <button aria-label="关闭">
            <svg width="29" height="29" stroke="#8a8a8a" strokeWidth="3"><path d="M1 1l27 27M28 1L1 28" /></svg>
          </button>
        </News>
        <Band />

        <Tabs>
          {periods.map((p) => <Tab key={p} $active={p === '日K'}>{p}</Tab>)}
          <Tab>
            <TabLabel>更多<Triangle dir="up" w={26} h={22} fill="#a8a8a8" /></TabLabel>
          </Tab>
          <GearButton aria-label="设置">
            <svg width="58" height="56" viewBox="0 0 58 56" fill="none" stroke="#9b9b9b" strokeWidth="5" strokeLinejoin="round">
              <path d="M16 4h26l13 24-13 24H16L3 28z" />
              <circle cx="29" cy="28" r="8" />
            </svg>
          </GearButton>
        </Tabs>

        <Minutes>
          {minutes.map((m) => <Minute key={m}>{m}</Minute>)}
        </Minutes>

        <Averages>
          <AverageButton $size={61}>均线<Triangle dir="down" w={21} h={14} fill={C.text} /></AverageButton>
          <AverageRows>
            <AverageRow>
              <Ink $color={C.ink} $size={37}>日线</Ink>
              <Ink $color="#111111">M5:133.11</Ink>
              <Ink $color="#dba23f">M10:140.96</Ink>
            </AverageRow>
            <AverageRow>
              <Ink $color="#db6a78">M20:142.18</Ink>
              <Ink $color="#81bd5c">M30:140.01</Ink>
              <Ink $color="#4878a4">M60:133.20</Ink>
            </AverageRow>
            <AverageRow>
              <Ink $color="#4a1a50">M120:129.98</Ink>
              <Ink $color="#a3553f">M250:123.05</Ink>
              <Ink $color="#4264d8">M8:138.57</Ink>
            </AverageRow>
            <AverageRow $big>
              <Ink $color={C.blue}>半导体:11671.89</Ink>
              <Ink $color={C.blue}>−2.03%</Ink>
              <Triangle dir="down" w={22} h={15} fill={C.blue} />
            </AverageRow>
          </AverageRows>
          <AverageSide>
            <button>前复权</button>
            <ChipToggle>筹码</ChipToggle>
          </AverageSide>
        </Averages>

        <Board>
          <LeftColumn>
            <ChartFrame>
              <MainChart />
              <ChartTools>
                <Tool aria-label="最早">
                  <svg width="40" height="42" fill="none" stroke="#5c5c5c" strokeWidth="4"><path d="M21 2L3 21l18 19M38 2L20 21l18 19" /></svg>
                </Tool>
                <Tool aria-label="放大">
                  <svg width="40" height="40" stroke="#c8c8c8" strokeWidth="4"><path d="M1 20h38M20 1v38" /></svg>
                </Tool>
                <Tool aria-label="缩小">
                  <svg width="40" height="40" stroke="#5c5c5c" strokeWidth="5"><path d="M1 20h38" /></svg>
                </Tool>
                <Tool aria-label="左移">
                  <svg width="24" height="42" fill="none" stroke="#5c5c5c" strokeWidth="4"><path d="M22 2L3 21l19 19" /></svg>
                </Tool>
                <Tool aria-label="右移">
                  <svg width="24" height="42" fill="none" stroke="#5c5c5c" strokeWidth="4"><path d="M2 2l19 19L2 40" /></svg>
                </Tool>
                <Tool aria-label="全屏">
                  <svg width="44" height="44" fill="none" stroke="#5c5c5c" strokeWidth="4"><path d="M2 21V3h18M42 23v18H24" /></svg>
                </Tool>
              </ChartTools>
            </ChartFrame>
            <Axis>
              <Drawing viewBox="14 1823 745 19" aria-hidden="true">
                {[5, 6, 7, 8, 9, 10, 11, 12, 13, 14, 15].map((i) => {
                  const major = i % 4 === 3;
                  return (
                    <rect
                      key={i}
                      x={colX(i) - (major ? 2 : 1)}
                      y="1824"
                      width={major ? 4 : 2}
                      height={major ? 18 : 10}
                      fill={i === 5 ? '#d6d6d6' : '#909090'}
                    />
                  );
                })}
              </Drawing>
              <Dates>
                <time>2025-09-18</time>
                <time>09-29</time>
                <time>10-13</time>
                <time>10-17</time>
              </Dates>
            </Axis>

            <Panel>
              <Backdrop viewBox="14 1916 745 220" aria-hidden="true">
                <defs>
                  <linearGradient id="lime" x1="0" x2="1" y1="0" y2="0">
                    <stop offset="0" stopColor="#3fa022" />
                    <stop offset="0.5" stopColor="#86ee4e" />
                    <stop offset="1" stopColor="#3fa022" />
                  </linearGradient>
                </defs>
                <line x1="14" x2="759" y1="2026" y2="2026" stroke="#e6e6e6" strokeWidth="2" strokeDasharray="4 4" />
                <path d="M506 2031h15v22h-6v24l-11-12z" fill="url(#lime)" />
                <Candles data={phoenix} wick={3} />
                <Line color={C.teal} ys={[2059, 2052, 2044, 2041, 2033, 2026, 2018, 2014, 2008, 2006, 2014, 2026, 2045, 2065, 2083, 2096]} />
                <Line color={C.maroon} ys={[2088, 2081, 2074, 2073, 2068, 2062, 2054, 2050, 2040, 2038, 2048, 2063, 2082, 2099, 2114, 2126]} />
              </Backdrop>
              <PanelHead>
                <PickButton>QL凤凰线<Triangle dir="down" w={21} h={15} fill={C.text} /></PickButton>
                <HelpButton aria-label="说明"><Help size={42} /></HelpButton>
                <Ink $color={C.teal}>凰线:+136.12</Ink>
              </PanelHead>
              <PanelLine><Ink $color={C.maroon}>凤线:+130.11</Ink></PanelLine>
            </Panel>

            <Panel>
              <Backdrop viewBox="14 2152 745 220" aria-hidden="true">
                <line x1="14" x2="759" y1="2262" y2="2262" stroke="#e6e6e6" strokeWidth="2" strokeDasharray="4 4" />
                <g fontSize="34" fill="#999999">
                  <text x="128" y="2245" opacity="0.6">终</text>
                  <text x="263" y="2245">始</text>
                  <text x="308" y="2245">终</text>
                </g>
                <Line width={6} color={C.orange} ys={[2233, 2232, 2228, 2224, 2218, 2206, 2209, 2215, 2218, 2221, 2241, 2268, 2307, 2326, 2338, 2351]} />
                <Line width={6} color="#9a9a9a" ys={[2244, 2235, 2225, 2220, 2215, 2210, 2209, 2209, 2209, 2210, 2221, 2233, 2252, 2274, 2297, 2317]} />
                <rect x="36" y="2368" width="675" height="4" fill="#4d9434" />
              </Backdrop>
              <PanelHead>
                <PickButton>主力吸货<Triangle dir="down" w={21} h={15} fill={C.text} /></PickButton>
                <HelpButton aria-label="说明"><Help size={42} /></HelpButton>
                <Ink $color="#cb463e">底线:0.00</Ink>
              </PanelHead>
              <PanelLine>
                <Ink $color={C.green}>主力吸货:0.00</Ink>
                <Ink $color={C.orange}>风险:+11.00</Ink>
              </PanelLine>
              <PanelLine><Ink $color={C.mute}>涨跌:+28.14</Ink></PanelLine>
            </Panel>

            <Panel>
              <Backdrop viewBox="14 2388 745 220" aria-hidden="true">
                <Line color="#2b2b2b" ys={[2474, 2471, 2466, 2466, 2461, 2453, 2448, 2447, 2446, 2446, 2458, 2473, 2492, 2512]} />
                <Line color="#d97f58" ys={[2482, 2480, 2477, 2474, 2471, 2468, 2464, 2461, 2457, 2455, 2456, 2459, 2466, 2474, 2482, 2491]} />
              </Backdrop>
              <PanelHead>
                <PickButton>MACD(12,26,9)<Triangle dir="down" w={21} h={15} fill={C.text} /></PickButton>
                <HelpButton aria-label="说明"><Help size={42} /></HelpButton>
                <StrategyLink href="#strategy">查看指标战法</StrategyLink>
              </PanelHead>
              <PanelLine><Ink $color={C.green}>MACD:−5.04</Ink></PanelLine>
            </Panel>
          </LeftColumn>

          <ChipColumn>
            <ChipChart />
            <ChipBody>
              <ChipTabs>
                <ChipTab>全部筹码</ChipTab>
                <ChipTab $active>主力筹码</ChipTab>
              </ChipTabs>
              <dl>
                <ChipRow $label="#d5433c" $value="#d9474a"><dt>收盘获利</dt><dd>21.36%</dd></ChipRow>
                <ChipRow $label="#e8993c" $value="#e69b40"><dt>平均成本</dt><dd>135.40</dd></ChipRow>
                <ChipRow $value="#50a258" $glow><dt>主力持仓</dt><dd>−16.02%</dd></ChipRow>
              </dl>
              <Segmented>
                <Segment $active>90%筹码</Segment>
                <Segment>70%筹码</Segment>
              </Segmented>
              <dl>
                <ChipRow><dt>价格区间</dt><dd>122.40 − 148.60</dd></ChipRow>
                <ChipRow><dt>集中度</dt><dd>9.67%</dd></ChipRow>
                <ChipRow><dt>主力筹码用法<Help size={32} /></dt></ChipRow>
              </dl>
            </ChipBody>
          </ChipColumn>
        </Board>

        <Footer>
          <ActionBar>
            <Sector>
              <Triangle dir="up" w={31} h={19} fill="#b2b2b2" />
              <span>半导体</span>
              <SectorMove>-2.03%</SectorMove>
            </Sector>
            <Action>
              <svg width="60" height="66" viewBox="0 0 60 66" fill="none" stroke="#d0d0d0" strokeWidth="3">
                <path d="M8 2h44q5 0 5 5v44L45 64H8q-5 0-5-5V7q0-5 5-5z" />
                <path d="M10 18h40M10 27h40M10 36h40M10 44h28" />
              </svg>
              下单
            </Action>
            <Action>
              <svg width="70" height="66" viewBox="0 0 70 66" fill="none" stroke="#d0d0d0" strokeWidth="3">
                <path d="M22 5h26" />
                <rect x="2" y="12" width="66" height="48" rx="6" />
                <path d="M35 24v24M23 36h24" />
                <path d="M12 62h10M47 62h10" strokeWidth="5" />
              </svg>
              诊股
            </Action>
            <Action>
              <svg width="60" height="66" viewBox="0 0 60 66" fill="none" stroke="#d8d8d8" strokeWidth="3">
                <rect x="2" y="5" width="56" height="56" />
                <path d="M15 32h30" />
              </svg>
              删自选
            </Action>
            <Action>
              <svg width="62" height="66" viewBox="0 0 62 66" fill="none" stroke="#d0d0d0" strokeWidth="3">
                <circle cx="31" cy="33" r="29" />
                <path d="M18 24h26M18 41h26" />
              </svg>
              功能
            </Action>
          </ActionBar>
          <SystemBar>
            <button aria-label="后退">
              <svg width="56" height="58" fill="none" stroke="#b0b0b0" strokeWidth="5" strokeLinejoin="round"><path d="M50 4v50L4 29z" /></svg>
            </button>
            <button aria-label="主页">
              <svg width="56" height="56" fill="none" stroke="#b0b0b0" strokeWidth="5"><circle cx="28" cy="28" r="25" /></svg>
            </button>
            <button aria-label="最近任务">
              <svg width="54" height="54" fill="none" stroke="#b0b0b0" strokeWidth="5"><rect x="3" y="3" width="48" height="48" rx="2" /></svg>
            </button>
          </SystemBar>
        </Footer>
      </Shell>
    </>
  );
}
